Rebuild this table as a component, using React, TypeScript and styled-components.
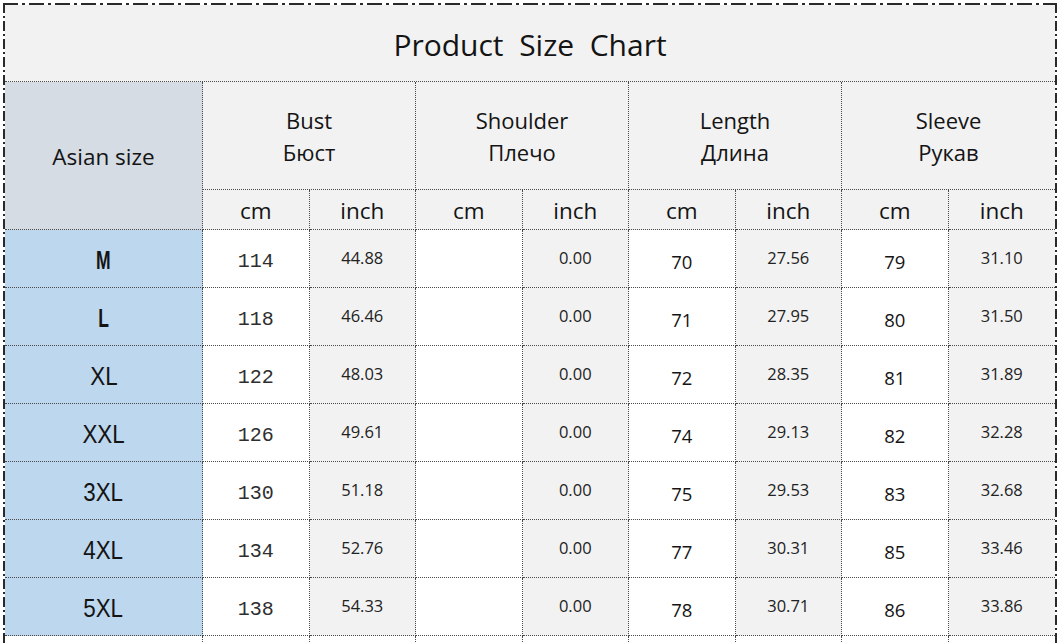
import styled, { createGlobalStyle, css } from "styled-components";

interface ISizeRow {
  size: string;
  bold?: boolean;
  bustCm: string;
  bustIn: string;
  shoulderCm: string;
  shoulderIn: string;
  lengthCm: string;
  lengthIn: string;
  sleeveCm: string;
  sleeveIn: string;
}

const rows: ISizeRow[] = [
  { size: "M", bold: true, bustCm: "114", bustIn: "44.88", shoulderCm: "", shoulderIn: "0.00", lengthCm: "70", lengthIn: "27.56", sleeveCm: "79", sleeveIn: "31.10" },
  { size: "L", bold: true, bustCm: "118", bustIn: "46.46", shoulderCm: "", shoulderIn: "0.00", lengthCm: "71", lengthIn: "27.95", sleeveCm: "80", sleeveIn: "31.50" },
  { size: "XL", bustCm: "122", bustIn: "48.03", shoulderCm: "", shoulderIn: "0.00", lengthCm: "72", lengthIn: "28.35", sleeveCm: "81", sleeveIn: "31.89" },
  { size: "XXL", bustCm: "126", bustIn: "49.61", shoulderCm: "", shoulderIn: "0.00", lengthCm: "74", lengthIn: "29.13", sleeveCm: "82", sleeveIn: "32.28" },
  { size: "3XL", bustCm: "130", bustIn: "51.18", shoulderCm: "", shoulderIn: "0.00", lengthCm: "75", lengthIn: "29.53", sleeveCm: "83", sleeveIn: "32.68" },
  { size: "4XL", bustCm: "134", bustIn: "52.76", shoulderCm: "", shoulderIn: "0.00", lengthCm: "77", lengthIn: "30.31", sleeveCm: "85", sleeveIn: "33.46" },
  { size: "5XL", bustCm: "138", bustIn: "54.33", shoulderCm: "", shoulderIn: "0.00", lengthCm: "78", lengthIn: "30.71", sleeveCm: "86", sleeveIn: "33.86" },
];

const groups = [
  { en: "Bust", ru: "Бюст" },
  { en: "Shoulder", ru: "Плечо" },
  { en: "Length", ru: "Длина" },
  { en: "Sleeve", ru: "Рукав" },
];

const GlobalStyle = createGlobalStyle`
  body {
    margin: 0;
    background: #ffffff;
    font-family: "Open Sans", "Noto Sans", sans-serif;
    color: #141414;
  }
`;

const Page = styled.div`
  padding: 3px 0 0 3px;
`;

const dashH = "repeating-linear-gradient(90deg, #2a2a2a 0 15px, transparent 15px 19px, #2a2a2a 19px 22px, transparent 22px 26px)";
const dashV = "repeating-linear-gradient(180deg, #2a2a2a 0 10px, transparent 10px 13px, #2a2a2a 13px 15px, transparent 15px 18px)";

const Frame = styled.div`
  width: 1054px;
  box-sizing: border-box;
  padding: 2px 2px 0 2px;
  background:
    ${dashH} top / 100% 2px no-repeat,
    ${dashV} left / 2px 100% no-repeat,
    ${dashV} right / 2px 100% no-repeat;
`;

const Grid = styled.div`
  display: grid;
  grid-template-columns: 198px repeat(8, 1fr);
  grid-template-rows: 77px 108px 40px repeat(7, 58px) 20px;
`;

const line = "1px dotted #4a4a4a";

const Cell = styled.div<{ $edge?: boolean }>`
  box-sizing: border-box;
  display: flex;
  align-items: center;
  justify-content: center;
  border-bottom: ${line};
  border-right: ${(p) => (p.$edge ? "none" : line)};
  text-align: center;
`;

const TitleCell = styled(Cell)`
  grid-column: 1 / -1;
  background: #f2f2f2;
  font-size: 30px;
  white-space: pre;
  padding-top: 2px;
`;

const SizeHead = styled(Cell)`
  grid-row: span 2;
  background: #d6dce4;
  font-size: 22.5px;
  padding-top: 2px;
`;

const GroupHead = styled(Cell)`
  grid-column: span 2;
  flex-direction: column;
  background: #f2f2f2;
  font-size: 22px;
  line-height: 32px;
`;

const UnitHead = styled(Cell)`
  background: #f2f2f2;
  font-size: 22.5px;
  padding-top: 1px;
`;

const SizeCell = styled(Cell)<{ $bold?: boolean }>`
  background: #bdd7ee;
  font-family: "Liberation Sans", Arial, sans-serif;
  font-size: 26px;
  padding-top: 4px;
  ${(p) =>
    p.$bold &&
    css`
      font-weight: bold;
      font-size: 25px;
    `}
`;

const Squeeze = styled.span<{ $bold?: boolean }>`
  display: inline-block;
  transform: scaleX(${(p) => (p.$bold ? 0.7 : 0.86)});
`;

const ValueCell = styled(Cell)<{ $kind: "mono" | "cm" | "inch" }>`
  background: ${(p) => (p.$kind === "inch" ? "#f2f2f2" : "#ffffff")};
  ${(p) =>
    p.$kind === "mono" &&
    css`
      font-family: "Liberation Mono", "Courier New", monospace;
      font-size: 20px;
      padding-top: 6px;
      color: #2e2e2e;
    `}
  ${(p) =>
    p.$kind === "cm" &&
    css`
      font-size: 18.5px;
      padding-top: 6px;
    `}
  ${(p) =>
    p.$kind === "inch" &&
    css`
      font-size: 16.5px;
      padding-bottom: 3px;
      color: #222222;
    `}
`;

const TailCell = styled(Cell)`
  border-bottom: none;
  background: #ffffff;
`;

const App = () => {
  return (
    <Page>
      <GlobalStyle />
      <Frame>
        <Grid>
          <TitleCell $edge>{"Product  Size  Chart"}</TitleCell>

          <SizeHead>Asian size</SizeHead>
          {groups.map((g, i) => (
            <GroupHead key={g.en} $edge={i === groups.length - 1}>
              <span>{g.en}</span>
              <span>{g.ru}</span>
            </GroupHead>
          ))}

          {groups.map((g, i) => [
            <UnitHead key={g.en + "cm"}>cm</UnitHead>,
            <UnitHead key={g.en + "in"} $edge={i === groups.length - 1}>
              inch
            </UnitHead>,
          ])}

          {rows.map((r) => [
            <SizeCell key={r.size} $bold={r.bold}>
              <Squeeze $bold={r.bold}>{r.size}</Squeeze>
            </SizeCell>,
            <ValueCell key={r.size + "bc"} $kind="mono">{r.bustCm}</ValueCell>,
            <ValueCell key={r.size + "bi"} $kind="inch">{r.bustIn}</ValueCell>,
            <ValueCell key={r.size + "sc"} $kind="cm">{r.shoulderCm}</ValueCell>,
            <ValueCell key={r.size + "si"} $kind="inch">{r.shoulderIn}</ValueCell>,
            <ValueCell key={r.size + "lc"} $kind="cm">{r.lengthCm}</ValueCell>,
            <ValueCell key={r.size + "li"} $kind="inch">{r.lengthIn}</ValueCell>,
            <ValueCell key={r.size + "vc"} $kind="cm">{r.sleeveCm}</ValueCell>,
            <ValueCell key={r.size + "vi"} $kind="inch" $edge>
              {r.sleeveIn}
            </ValueCell>,
          ])}

          {Array.from({ length: 9 }, (_, i) => (
            <TailCell key={"tail" + i} $edge={i === 8} />
          ))}
        </Grid>
      </Frame>
    </Page>
  );
};

export default App;
